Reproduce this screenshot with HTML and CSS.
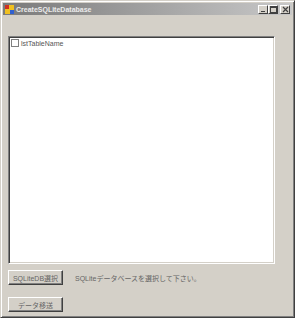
FILE: index.html
```html
<!DOCTYPE html>
<html lang="ja">
<head>
    <meta charset="UTF-8">
    <title>CreateSQLiteDatabase</title>
    <link rel="stylesheet" href="styles.css">
</head>
<body>
    <div class="window">
        <div class="titlebar">
            <span class="app-icon">
                <svg width="9" height="9" viewBox="0 0 9 9">
                    <rect x="0" y="0" width="9" height="9" fill="#f0c020"/>
                    <rect x="0" y="0" width="4" height="4" fill="#d03020"/>
                    <rect x="5" y="5" width="4" height="4" fill="#3060d0"/>
                </svg>
            </span>
            <span class="title">CreateSQLiteDatabase</span>
            <div class="caption-buttons">
                <span class="cap-btn">
                    <svg width="7" height="7" viewBox="0 0 7 7"><rect x="1" y="5" width="4" height="1" fill="#404040"/></svg>
                </span>
                <span class="cap-btn">
                    <svg width="7" height="7" viewBox="0 0 7 7"><rect x="0.5" y="0.5" width="6" height="6" fill="none" stroke="#404040"/><rect x="0" y="0" width="7" height="2" fill="#404040"/></svg>
                </span>
                <span class="cap-btn close">
                    <svg width="7" height="7" viewBox="0 0 7 7"><path d="M1 1 L6 6 M6 1 L1 6" stroke="#404040" stroke-width="1.2"/></svg>
                </span>
            </div>
        </div>

        <div class="client">
            <div class="listbox">
                <div class="list-item">
                    <span class="checkbox"></span>
                    <span>lstTableName</span>
                </div>
            </div>

            <div class="row">
                <button class="btn">SQLiteDB選択</button>
                <span class="status">SQLiteデータベースを選択して下さい。</span>
            </div>
            <div class="row">
                <button class="btn">データ移送</button>
            </div>
        </div>
    </div>
</body>
</html>
```

FILE: styles.css
```css
body {
    margin: 0;
    background-color: #ffffff;
    font-family: "Liberation Sans", "Noto Sans CJK JP", sans-serif;
    font-size: 7px;
    color: #000;
}
.window {
    width: 289px;
    height: 312px;
    background: #d4d0c8;
    border: 1px solid;
    border-color: #d4d0c8 #404040 #404040 #d4d0c8;
    box-shadow: inset 1px 1px 0 #ffffff, inset -1px -1px 0 #808080;
    padding: 2px;
    display: flex;
    flex-direction: column;
}
.titlebar {
    height: 12px;
    background: linear-gradient(to right, #7a7a7a, #c8c8c8);
    display: flex;
    align-items: center;
    padding: 0 2px;
}
.app-icon {
    display: flex;
    margin-right: 2px;
}
.title {
    color: #ececec;
    font-weight: bold;
    font-size: 7px;
    flex: 1;
}
.caption-buttons {
    display: flex;
}
.cap-btn {
    width: 8px;
    height: 7px;
    background: #d4d0c8;
    border: 1px solid;
    border-color: #ffffff #404040 #404040 #ffffff;
    display: flex;
    align-items: center;
    justify-content: center;
}
.cap-btn.close {
    margin-left: 2px;
}
.client {
    flex: 1;
    display: flex;
    flex-direction: column;
    padding: 21px 0 0 5px;
}
.listbox {
    width: 261px;
    height: 222px;
    background: #ffffff;
    border: 1px solid;
    border-color: #808080 #ffffff #ffffff #808080;
    box-shadow: inset 1px 1px 0 #404040, inset -1px -1px 0 #d4d0c8;
    padding: 2px 2px;
}
.list-item {
    display: flex;
    align-items: center;
    gap: 2px;
    font-size: 7px;
    color: #555;
}
.checkbox {
    width: 6px;
    height: 6px;
    border: 1px solid #808080;
    background: #fff;
}
.row {
    display: flex;
    align-items: center;
    margin-top: 6px;
}
.row + .row {
    margin-top: 12px;
}
.btn {
    width: 55px;
    height: 15px;
    padding: 0;
    background: #d4d0c8;
    border: 1px solid;
    border-color: #ffffff #404040 #404040 #ffffff;
    box-shadow: inset -1px -1px 0 #808080;
    font-family: "Liberation Sans", "Noto Sans CJK JP", sans-serif;
    font-size: 7px;
    color: #666;
}
.status {
    margin-left: 12px;
    font-size: 7px;
    color: #666;
}
```
